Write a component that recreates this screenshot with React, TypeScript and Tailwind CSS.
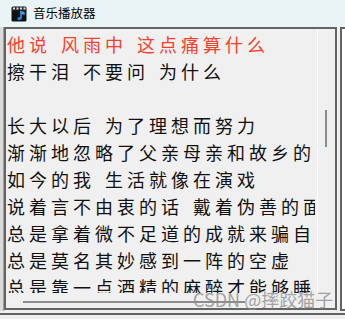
import React from "react";

const lines: { t: string; red?: boolean }[] = [
  { t: "他说 风雨中 这点痛算什么", red: true },
  { t: "擦干泪 不要问 为什么" },
  { t: "" },
  { t: "长大以后 为了理想而努力" },
  { t: "渐渐地忽略了父亲母亲和故乡的消息" },
  { t: "如今的我 生活就像在演戏" },
  { t: "说着言不由衷的话 戴着伪善的面具" },
  { t: "总是拿着微不足道的成就来骗自己" },
  { t: "总是莫名其妙感到一阵的空虚" },
  { t: "总是靠一点酒精的麻醉才能够睡去" },
];

function AppIcon() {
  return (
    <svg width="16" height="16" viewBox="0 0 16 16">
      <rect x="0.5" y="0.5" width="15" height="15" rx="1.5" fill="#111" />
      <rect x="1" y="1" width="14" height="3.5" fill="#2a2a2a" />
      <rect x="2" y="1.5" width="2" height="2" fill="#ddd" />
      <rect x="5.5" y="1.5" width="2" height="2" fill="#ddd" />
      <rect x="9" y="1.5" width="2" height="2" fill="#ddd" />
      <rect x="12.5" y="1.5" width="2" height="2" fill="#ddd" />
      <path d="M9 5.5 L13 6.5 L13 8 L10 7.3 L10 12.5" stroke="#3aa0ff" strokeWidth="1.4" fill="none" />
      <ellipse cx="8.4" cy="12.6" rx="2.1" ry="1.6" fill="#1e7fe0" />
    </svg>
  );
}

export default function App() {
  return (
    <div
      className="w-[345px] h-[319px] bg-[#f0f0f0] overflow-hidden relative flex flex-col"
      style={{ fontFamily: '"Noto Sans CJK SC", "Noto Sans", sans-serif' }}
    >
      {/* title bar */}
      <div className="h-[27px] bg-[#eaf4f7] flex items-center pl-[11px] shrink-0">
        <AppIcon />
        <span className="ml-[6px] text-[12.5px] leading-none text-black">音乐播放器</span>
      </div>

      {/* body */}
      <div className="h-[284px] flex items-start shrink-0">
        <div className="w-[4px] h-full bg-[#dadada] border-r border-[#a0a0a0]" />
        <div className="w-[333px] h-[283px] border-2 border-[#646464] flex flex-col">
          <div className="flex h-[264px]">
            <div className="w-[309px] h-full overflow-hidden pt-[2px] pl-[1px]">
              {lines.map((l, i) => (
                <div
                  key={i}
                  className={`h-[27px] leading-[27px] text-[18px] tracking-[4px] [word-spacing:2px] whitespace-nowrap ${
                    l.red ? "text-[#f5402c]" : "text-[#111]"
                  }`}
                >
                  {l.t || "\u00a0"}
                </div>
              ))}
            </div>
            <div className="w-[2px]" />
            <div className="w-[18px] h-full border-l border-white flex flex-col">
              <div className="mt-[81px] ml-[7px] w-[2px] h-[37px] bg-[#8c8c8c]" />
            </div>
          </div>
          <div className="h-[15px] flex flex-col">
            <div className="mt-[8px] ml-[17px] w-[222px] h-[2px] bg-[#8c8c8c]" />
          </div>
        </div>
        <div className="w-[3px]" />
        <div className="w-[5px] h-[284px] border-l-2 border-t-2 border-b-2 border-[#646464] bg-white" />
      </div>

      {/* bottom */}
      <div className="mt-[2px] h-[2px] bg-[#646464] shrink-0" />

      {/* watermark */}
      <div className="absolute left-[193px] top-[288px] text-[18px] leading-[22px] text-[#8f8f8f] opacity-80 whitespace-nowrap">
        CSDN @摔跤猫子
      </div>
    </div>
  );
}
